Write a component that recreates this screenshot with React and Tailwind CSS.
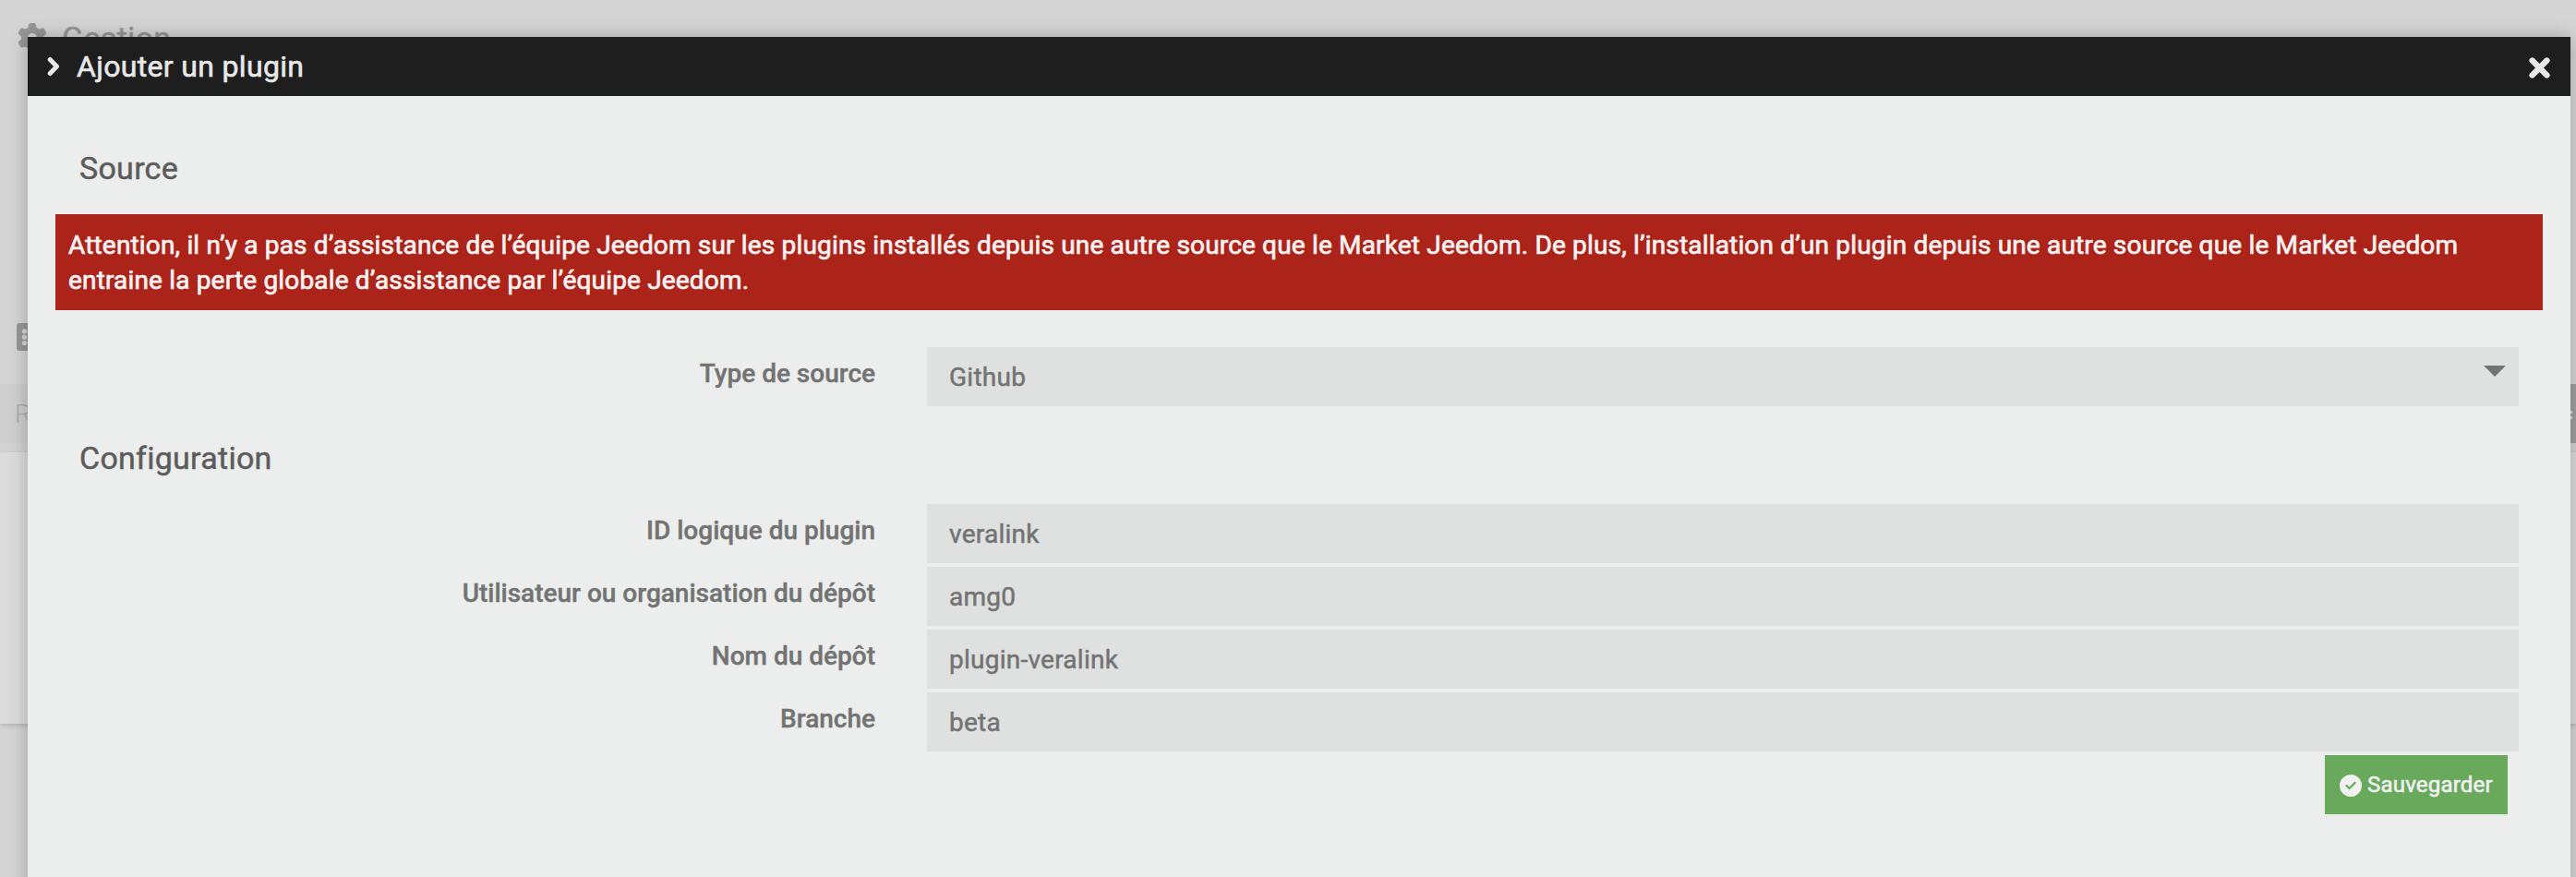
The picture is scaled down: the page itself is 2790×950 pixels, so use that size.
import { FaCircleCheck, FaGear } from "react-icons/fa6";

const fields = [
  ["ID logique du plugin", "veralink"],
  ["Utilisateur ou organisation du dépôt", "amg0"],
  ["Nom du dépôt", "plugin-veralink"],
  ["Branche", "beta"],
];

function Field({ label, children }) {
  return (
    <div className="flex h-16">
      <div className="w-[918px] text-right text-[28px] leading-[58px] font-medium text-[#737373] [-webkit-text-stroke:0.4px]">
        {label}
      </div>
      <div className="ml-[56px] flex h-16 w-[1724px] justify-between bg-[#dfe1e0] pr-[14px] pl-6 text-[28px] leading-[66px] tracking-[0.25px] text-[#737373] [-webkit-text-stroke:0.5px]">
        {children}
      </div>
    </div>
  );
}

function Backdrop() {
  return (
    <div className="flex h-[950px] w-full flex-col bg-[#d5d5d5]">
      <div className="flex h-[350px] items-start gap-4 pt-[22px] pl-[19px] text-[#979797]">
        <FaGear className="mt-[3px] h-8 w-8" />
        <span className="text-[34px] leading-[38px] tracking-[0.3px] [-webkit-text-stroke:0.5px]">Gestion</span>
      </div>
      <div className="h-[66px] pl-[18px]">
        <svg className="h-[30px] w-[30px]" viewBox="0 0 30 30">
          <rect width="30" height="30" rx="3" fill="#979797" />
          <circle cx="8.5" cy="9" r="2.7" fill="#d5d5d5" />
          <circle cx="8.5" cy="15.3" r="2.7" fill="#d5d5d5" />
          <circle cx="8.5" cy="21.6" r="2.7" fill="#d5d5d5" />
        </svg>
      </div>
      <div className="flex h-16 justify-between bg-[#cfcfcf] pl-4">
        <span className="text-[28px] leading-[66px] font-light text-[#adadad]">R</span>
        <div className="flex w-10 flex-col gap-[3px] bg-[#a0a0a0] pt-[29px]">
          <div className="ml-8 h-[3px] w-[4px] shrink-0 bg-[#dddddd]" />
          <div className="ml-8 h-[3px] w-[4px] shrink-0 bg-[#dddddd]" />
        </div>
      </div>
      <div className="h-[10px] bg-[#d3d3d3]" />
      <div className="h-[294px] bg-[#dcdcdc] shadow-[0_2px_5px_rgba(0,0,0,0.16)]" />
    </div>
  );
}

export default function App() {
  return (
    <div className="relative h-[950px] w-[2790px] overflow-hidden font-[Roboto,sans-serif]">
      <Backdrop />
      <section className="absolute top-[40px] left-[30px] h-[1000px] w-[2754px] bg-[#eceeed] shadow-[0_0_20px_rgba(0,0,0,0.26)]">
        <header className="flex h-16 items-center justify-between bg-[#1e1e1e] pr-[22px] pl-[21px] text-[#e8e8e8]">
          <div className="flex items-center">
            <svg className="h-[22px] w-[14px]" viewBox="0 0 14 22" fill="none" stroke="currentColor" strokeWidth="5" strokeLinecap="round" strokeLinejoin="round">
              <path d="M3.2 3.5 L10.5 11 L3.2 18.5" />
            </svg>
            <h1 className="ml-[18px] text-[32px] leading-[64px] tracking-[0.33px] [-webkit-text-stroke:0.6px]">Ajouter un plugin</h1>
          </div>
          <svg className="mt-[3px] h-[23px] w-[23px]" viewBox="0 0 23 23" stroke="currentColor" strokeWidth="6.4" strokeLinecap="round">
            <path d="M3.6 3.6 L19.4 19.4 M19.4 3.6 L3.6 19.4" />
          </svg>
        </header>
        <h2 className="h-[128px] pt-[54px] pl-[56px] text-[34px] leading-[48px] tracking-[0.27px] text-[#5c5c5c] [-webkit-text-stroke:0.5px]">Source</h2>
        <div className="ml-[30px] h-[104px] w-[2694px] bg-[#ac2319] px-[14px] pt-[15px] text-[28px] leading-[38px] tracking-[0.17px] whitespace-nowrap text-[#f2f2f2] [-webkit-text-stroke:0.7px]">
          Attention, il n’y a pas d’assistance de l’équipe Jeedom sur les plugins installés depuis une autre source que le Market Jeedom. De plus, l’installation d’un plugin depuis une autre source que le Market Jeedom
          <br />
          entraine la perte globale d’assistance par l’équipe Jeedom.
        </div>
        <div className="mt-10">
          <Field label="Type de source">
            <span>Github</span>
            <svg className="mt-5 h-3 w-6" viewBox="0 0 24 12">
              <path d="M0 0H24L12 12Z" fill="#737373" />
            </svg>
          </Field>
        </div>
        <h2 className="h-[106px] pt-[32px] pl-[56px] text-[34px] leading-[48px] tracking-[0.27px] text-[#5c5c5c] [-webkit-text-stroke:0.5px]">Configuration</h2>
        <div className="flex flex-col gap-1">
          {fields.map(([label, value]) => (
            <Field key={label} label={label}>
              <span>{value}</span>
            </Field>
          ))}
        </div>
        <div className="mt-1 flex justify-end pr-[68px]">
          <button className="flex h-16 w-[198px] items-center bg-[#68a95c] pl-4 text-[#f0f0f0]">
            <FaCircleCheck className="mt-[2px] h-6 w-6" />
            <span className="ml-[6px] text-[24px] leading-[66px] tracking-[0.2px] [-webkit-text-stroke:0.6px]">Sauvegarder</span>
          </button>
        </div>
      </section>
    </div>
  );
}
